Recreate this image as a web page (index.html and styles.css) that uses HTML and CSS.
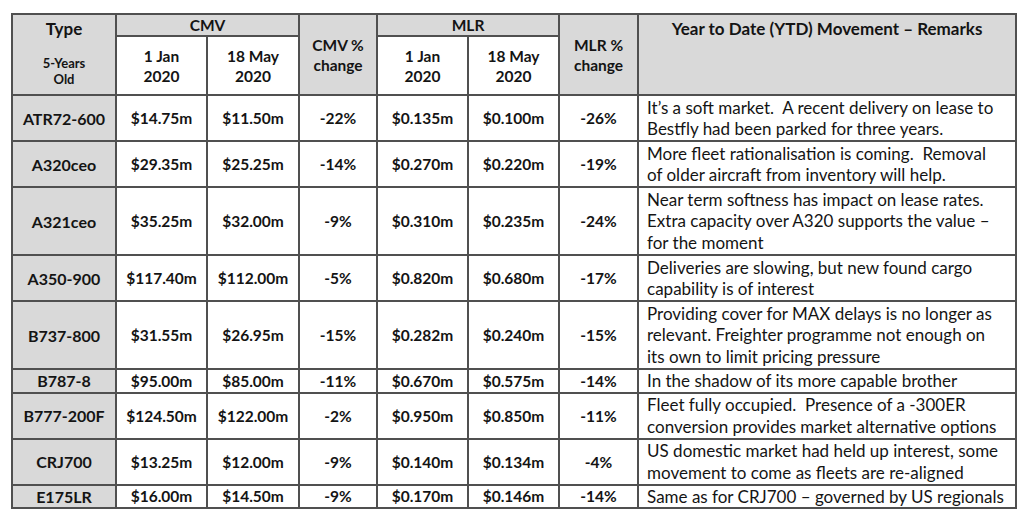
FILE: index.html
```html
<!DOCTYPE html>
<html lang="en">
<head>
<meta charset="utf-8">
<title>Aircraft values</title>
<link rel="stylesheet" href="styles.css">
</head>
<body>
<div class="wrap">
<table class="tbl">
  <colgroup>
    <col class="c-type"><col class="c-val"><col class="c-val2"><col class="c-pct">
    <col class="c-val"><col class="c-val"><col class="c-pct2"><col class="c-rem">
  </colgroup>
  <thead>
    <tr class="h-top">
      <th rowspan="2" class="type-h"><div class="type-title">Type</div><div class="type-sub">5-Years<br>Old</div></th>
      <th colspan="2">CMV</th>
      <th rowspan="2">CMV %<br>change</th>
      <th colspan="2">MLR</th>
      <th rowspan="2">MLR %<br>change</th>
      <th rowspan="2" class="rem-h">Year to Date (YTD) Movement – Remarks</th>
    </tr>
    <tr class="h-sub">
      <th class="sub">1 Jan<br>2020</th>
      <th class="sub">18 May<br>2020</th>
      <th class="sub">1 Jan<br>2020</th>
      <th class="sub">18 May<br>2020</th>
    </tr>
  </thead>
  <tbody>
    <tr class="r2">
      <td class="type">ATR72-600</td><td>$14.75m</td><td>$11.50m</td><td>-22%</td><td>$0.135m</td><td>$0.100m</td><td>-26%</td>
      <td class="rem">It’s a soft market.&nbsp; A recent delivery on lease to<br>Bestfly had been parked for three years.</td>
    </tr>
    <tr class="r2">
      <td class="type">A320ceo</td><td>$29.35m</td><td>$25.25m</td><td>-14%</td><td>$0.270m</td><td>$0.220m</td><td>-19%</td>
      <td class="rem">More fleet rationalisation is coming.&nbsp; Removal<br>of older aircraft from inventory will help.</td>
    </tr>
    <tr class="r3">
      <td class="type">A321ceo</td><td>$35.25m</td><td>$32.00m</td><td>-9%</td><td>$0.310m</td><td>$0.235m</td><td>-24%</td>
      <td class="rem">Near term softness has impact on lease rates.<br>Extra capacity over A320 supports the value –<br>for the moment</td>
    </tr>
    <tr class="r2">
      <td class="type">A350-900</td><td>$117.40m</td><td>$112.00m</td><td>-5%</td><td>$0.820m</td><td>$0.680m</td><td>-17%</td>
      <td class="rem">Deliveries are slowing, but new found cargo<br>capability is of interest</td>
    </tr>
    <tr class="r3">
      <td class="type">B737-800</td><td>$31.55m</td><td>$26.95m</td><td>-15%</td><td>$0.282m</td><td>$0.240m</td><td>-15%</td>
      <td class="rem">Providing cover for MAX delays is no longer as<br>relevant. Freighter programme not enough on<br>its own to limit pricing pressure</td>
    </tr>
    <tr class="r1">
      <td class="type">B787-8</td><td>$95.00m</td><td>$85.00m</td><td>-11%</td><td>$0.670m</td><td>$0.575m</td><td>-14%</td>
      <td class="rem">In the shadow of its more capable brother</td>
    </tr>
    <tr class="r2">
      <td class="type">B777-200F</td><td>$124.50m</td><td>$122.00m</td><td>-2%</td><td>$0.950m</td><td>$0.850m</td><td>-11%</td>
      <td class="rem">Fleet fully occupied.&nbsp; Presence of a -300ER<br>conversion provides market alternative options</td>
    </tr>
    <tr class="r2">
      <td class="type">CRJ700</td><td>$13.25m</td><td>$12.00m</td><td>-9%</td><td>$0.140m</td><td>$0.134m</td><td>-4%</td>
      <td class="rem">US domestic market had held up interest, some<br>movement to come as fleets are re-aligned</td>
    </tr>
    <tr class="r1">
      <td class="type">E175LR</td><td>$16.00m</td><td>$14.50m</td><td>-9%</td><td>$0.170m</td><td>$0.146m</td><td>-14%</td>
      <td class="rem">Same as for CRJ700 – governed by US regionals</td>
    </tr>
  </tbody>
</table>
</div>
</body>
</html>
```
FILE: styles.css
```css
html, body {
  margin: 0;
  padding: 0;
  background: #ffffff;
}
body {
  font-family: Lato, "Open Sans", "Liberation Sans", sans-serif;
  color: #141414;
}
.wrap {
  padding: 13px 0 0 11px;
}
.tbl {
  border-collapse: collapse;
  table-layout: fixed;
  width: 1006px;
}
.c-type { width: 104px; }
.c-val { width: 91px; }
.c-val2 { width: 92px; }
.c-pct { width: 78px; }
.c-pct2 { width: 79px; }
.c-rem { width: 378px; }

.tbl th, .tbl td {
  border: 2px solid #505050;
  padding: 0;
  text-align: center;
  vertical-align: middle;
  overflow: hidden;
}
.tbl th {
  background: #d9d9d9;
  font-weight: 700;
  font-size: 15.5px;
  line-height: 20px;
}
.h-top { height: 21px; }
.h-sub { height: 59px; }
.tbl th.sub {
  background: #ffffff;
}
.tbl th.type-h {
  vertical-align: top;
  padding-top: 3px;
}
.type-title {
  font-size: 17px;
  line-height: 22px;
}
.type-sub {
  margin-top: 15px;
  font-size: 13px;
  line-height: 16px;
}
.tbl th.rem-h {
  vertical-align: top;
  padding-top: 3px;
  font-size: 17px;
  line-height: 22px;
}
.tbl td {
  font-weight: 700;
  font-size: 15.5px;
  background: #ffffff;
}
.tbl td.type {
  background: #d9d9d9;
  font-size: 16px;
}
.tbl td.rem {
  font-weight: 400;
  text-align: left;
  padding-left: 8px;
  font-size: 17px;
  line-height: 21.5px;
  white-space: nowrap;
}
.r1 { height: 23px; }
.r2 { height: 46px; }
.r3 { height: 68px; }
```
